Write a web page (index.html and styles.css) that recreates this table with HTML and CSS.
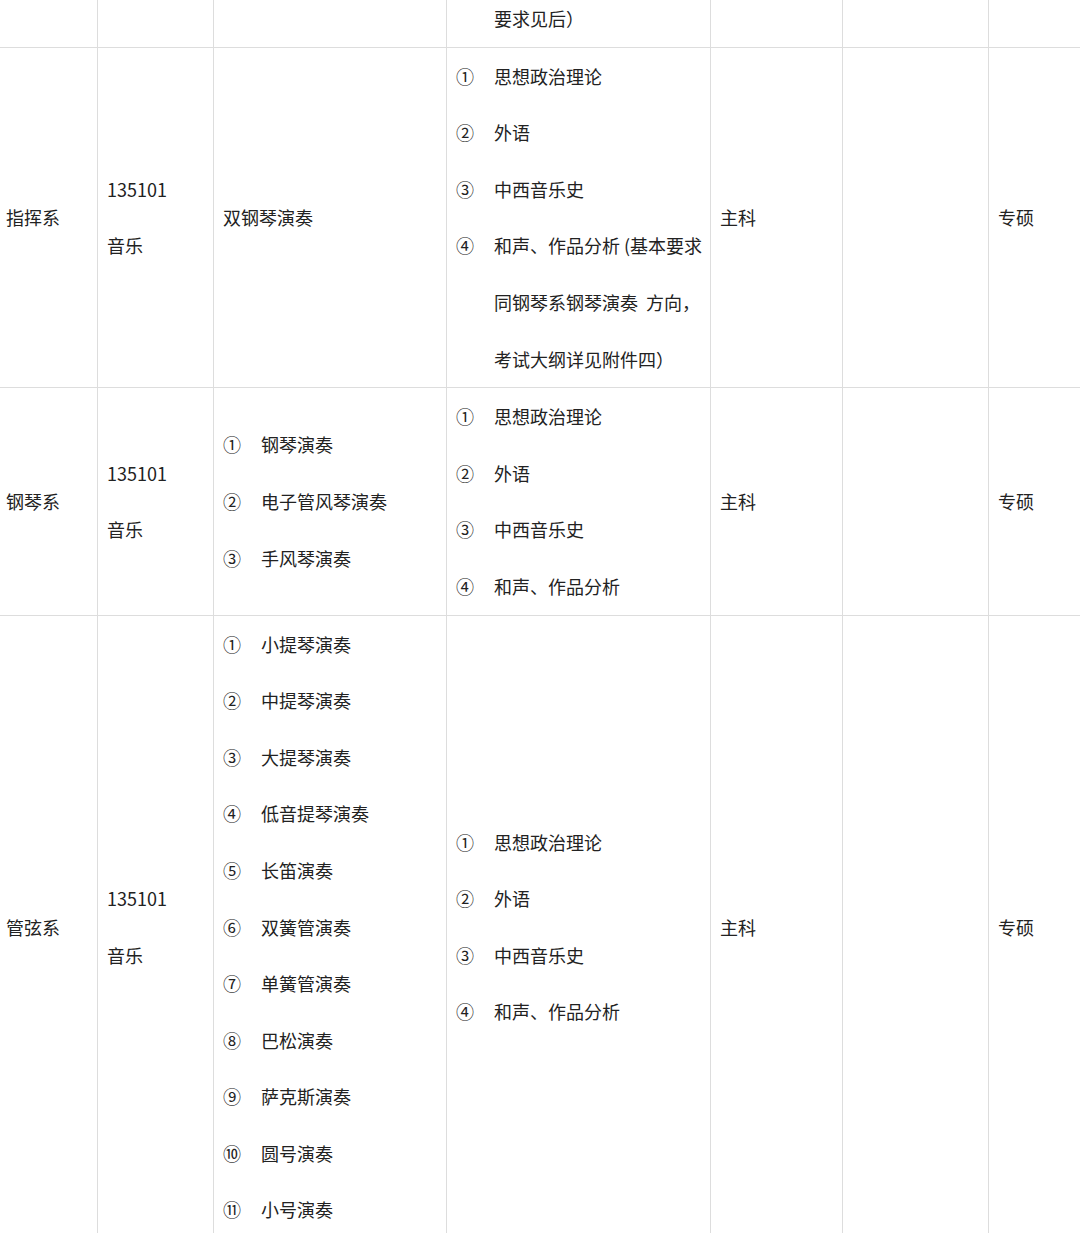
FILE: index.html
```html
<!DOCTYPE html>
<html lang="zh-CN">
<head>
<meta charset="utf-8">
<title>招生专业目录</title>
<link rel="stylesheet" href="styles.css">
</head>
<body>
<div class="wrap">
<table class="catalog">
  <colgroup>
    <col class="c1"><col class="c2"><col class="c3"><col class="c4"><col class="c5"><col class="c6"><col class="c7">
  </colgroup>
  <tbody>
    <tr>
      <td></td>
      <td></td>
      <td></td>
      <td><div class="item"><span class="num"></span><span class="txt">要求见后）</span></div></td>
      <td></td>
      <td></td>
      <td></td>
    </tr>
    <tr>
      <td>指挥系</td>
      <td>135101<br>音乐</td>
      <td>双钢琴演奏</td>
      <td>
        <div class="item"><span class="num">①</span><span class="txt">思想政治理论</span></div>
        <div class="item"><span class="num">②</span><span class="txt">外语</span></div>
        <div class="item"><span class="num">③</span><span class="txt">中西音乐史</span></div>
        <div class="item"><span class="num">④</span><span class="txt">和声、作品分析 (基本要求<br>同钢琴系钢琴演奏  方向，<br>考试大纲详见附件四）</span></div>
      </td>
      <td>主科</td>
      <td></td>
      <td>专硕</td>
    </tr>
    <tr>
      <td>钢琴系</td>
      <td>135101<br>音乐</td>
      <td>
        <div class="item"><span class="num">①</span><span class="txt">钢琴演奏</span></div>
        <div class="item"><span class="num">②</span><span class="txt">电子管风琴演奏</span></div>
        <div class="item"><span class="num">③</span><span class="txt">手风琴演奏</span></div>
      </td>
      <td>
        <div class="item"><span class="num">①</span><span class="txt">思想政治理论</span></div>
        <div class="item"><span class="num">②</span><span class="txt">外语</span></div>
        <div class="item"><span class="num">③</span><span class="txt">中西音乐史</span></div>
        <div class="item"><span class="num">④</span><span class="txt">和声、作品分析</span></div>
      </td>
      <td>主科</td>
      <td></td>
      <td>专硕</td>
    </tr>
    <tr>
      <td>管弦系</td>
      <td>135101<br>音乐</td>
      <td>
        <div class="item"><span class="num">①</span><span class="txt">小提琴演奏</span></div>
        <div class="item"><span class="num">②</span><span class="txt">中提琴演奏</span></div>
        <div class="item"><span class="num">③</span><span class="txt">大提琴演奏</span></div>
        <div class="item"><span class="num">④</span><span class="txt">低音提琴演奏</span></div>
        <div class="item"><span class="num">⑤</span><span class="txt">长笛演奏</span></div>
        <div class="item"><span class="num">⑥</span><span class="txt">双簧管演奏</span></div>
        <div class="item"><span class="num">⑦</span><span class="txt">单簧管演奏</span></div>
        <div class="item"><span class="num">⑧</span><span class="txt">巴松演奏</span></div>
        <div class="item"><span class="num">⑨</span><span class="txt">萨克斯演奏</span></div>
        <div class="item"><span class="num">⑩</span><span class="txt">圆号演奏</span></div>
        <div class="item"><span class="num">⑪</span><span class="txt">小号演奏</span></div>
      </td>
      <td>
        <div class="item"><span class="num">①</span><span class="txt">思想政治理论</span></div>
        <div class="item"><span class="num">②</span><span class="txt">外语</span></div>
        <div class="item"><span class="num">③</span><span class="txt">中西音乐史</span></div>
        <div class="item"><span class="num">④</span><span class="txt">和声、作品分析</span></div>
      </td>
      <td>主科</td>
      <td></td>
      <td>专硕</td>
    </tr>
  </tbody>
</table>
</div>
</body>
</html>
```
FILE: styles.css
```css
html, body {
  margin: 0;
  padding: 0;
  background: #ffffff;
}

.wrap {
  width: 1080px;
  height: 1233px;
  overflow: hidden;
}

.catalog {
  margin-top: -10px;
  margin-left: -4px;
  border-collapse: collapse;
  table-layout: fixed;
  width: 1112px;
  font-family: "Noto Sans CJK SC", "Noto Sans", sans-serif;
  font-size: 18px;
  line-height: 56.6px;
  color: #222222;
}

.c1 { width: 101px; }
.c2 { width: 116px; }
.c3 { width: 233px; }
.c4 { width: 264px; }
.c5 { width: 132px; }
.c6 { width: 146px; }
.c7 { width: 120px; }

.catalog td {
  border: 1px solid #dddddd;
  padding: 0 10px 0 9px;
  vertical-align: middle;
  white-space: nowrap;
}

.catalog tr:first-child td {
  border-top: none;
}

.item {
  display: flex;
}

.num {
  flex: none;
  width: 38px;
}

.txt {
  white-space: pre;
}
```
